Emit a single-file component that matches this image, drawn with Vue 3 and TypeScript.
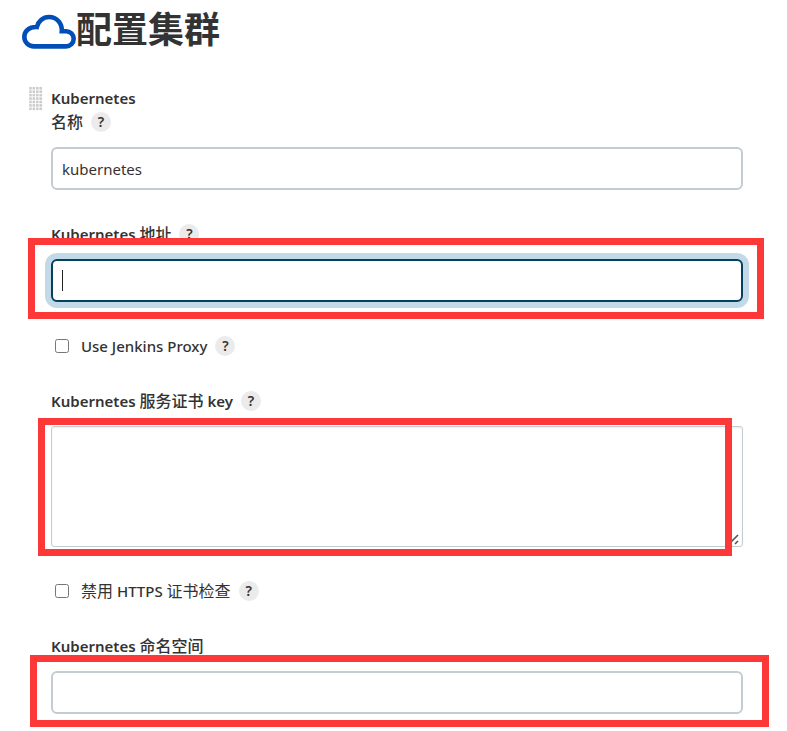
<script setup lang="ts">
import { ref } from 'vue'

const name = ref('kubernetes')
const address = ref('')
const certificateKey = ref('')
const namespace = ref('')
const useProxy = ref(false)
const disableHttpsCheck = ref(false)
</script>

<template>
  <main class="page">
    <h1 class="title">
      <svg class="cloud" viewBox="0 0 54 36" aria-hidden="true">
        <path
          d="M12 32.400H44.100A7.600 7.600 0 0 0 44.100 17.200H39.800C40.200 9 34.500 3 27.200 3C20.800 3 16 7.500 14.800 13C7 12.600 2.300 17.300 2.300 22.800C2.300 28.300 6.500 32.400 12 32.400Z"
        />
      </svg>
      <span>配置集群</span>
    </h1>

    <form class="form" @submit.prevent>
      <div class="section">
        <svg class="handle" viewBox="0 0 16 28" aria-hidden="true">
          <defs>
            <pattern id="grip-dots" width="4" height="4" patternUnits="userSpaceOnUse">
              <rect width="3" height="3" />
            </pattern>
          </defs>
          <rect width="16" height="28" fill="url(#grip-dots)" />
        </svg>
        <strong>Kubernetes</strong>
      </div>

      <div class="field">
        <div class="label">
          <label for="name" class="cjk">名称</label>
          <button type="button" class="help">?</button>
        </div>
        <div class="control">
          <input id="name" v-model="name" type="text" class="input" />
        </div>
      </div>

      <div class="field">
        <div class="label">
          <label for="address">Kubernetes <span class="cjk">地址</span></label>
          <button type="button" class="help">?</button>
        </div>
        <div class="control">
          <input id="address" v-model="address" type="text" class="input active" />
          <span class="caret"></span>
          <span class="mark mark-address"></span>
        </div>
      </div>

      <div class="check">
        <input id="proxy" v-model="useProxy" type="checkbox" />
        <label for="proxy">Use Jenkins Proxy</label>
        <button type="button" class="help">?</button>
      </div>

      <div class="field">
        <div class="label">
          <label for="key">Kubernetes <span class="cjk">服务证书</span> key</label>
          <button type="button" class="help">?</button>
        </div>
        <div class="control">
          <textarea id="key" v-model="certificateKey" class="input area"></textarea>
          <svg class="resizer" viewBox="0 0 12 12" aria-hidden="true">
            <path d="M2 9L9 2M6 11L9 8" />
          </svg>
          <span class="mark mark-key"></span>
        </div>
      </div>

      <div class="check">
        <input id="https" v-model="disableHttpsCheck" type="checkbox" />
        <label for="https"><span class="cjk">禁用</span> HTTPS <span class="cjk">证书检查</span></label>
        <button type="button" class="help">?</button>
      </div>

      <div class="field">
        <div class="label">
          <label for="namespace">Kubernetes <span class="cjk">命名空间</span></label>
        </div>
        <div class="control">
          <input id="namespace" v-model="namespace" type="text" class="input" />
          <span class="mark mark-namespace"></span>
        </div>
      </div>
    </form>
  </main>
</template>

<style>
body {
  margin: 0;
  background: #fff;
}
</style>

<style scoped>
.page {
  box-sizing: border-box;
  padding: 8px 44px 16px 22px;
  color: #333;
  font-family: "Noto Sans", "Noto Sans CJK SC", sans-serif;
  font-size: 15px;
  line-height: 24px;
}

.title {
  display: flex;
  align-items: center;
  margin: 0;
  height: 44px;
  font-size: 36px;
  line-height: 44px;
  font-weight: 700;
}

.cloud {
  width: 54px;
  height: 36px;
  margin-top: 4px;
  fill: none;
  stroke: #024eb9;
  stroke-width: 4.6;
}

.form {
  display: flex;
  flex-direction: column;
  gap: 32px;
  margin-top: 34px;
  padding-left: 29px;
}

.section {
  display: flex;
  gap: 8px;
  height: 24px;
  margin: 0 0 -32px -22px;
}

.section strong {
  font-weight: 600;
}

.handle {
  width: 14px;
  height: 24px;
  margin-top: 1px;
  fill: #ccc;
}

.label {
  display: flex;
  align-items: center;
  gap: 8px;
  height: 24px;
  margin-bottom: 13px;
  font-weight: 600;
}

.cjk {
  font-size: 16px;
  font-weight: 500;
}

.check .cjk {
  font-weight: 400;
}

.help {
  width: 20px;
  height: 20px;
  padding: 0;
  border: 0;
  border-radius: 50%;
  background: #ebebeb;
  color: #333;
  font: 600 14px/20px "Noto Sans", sans-serif;
}

.control {
  position: relative;
  display: flex;
}

.input {
  box-sizing: border-box;
  width: 100%;
  height: 43px;
  margin: 0;
  padding: 0 9px;
  border: 2px solid #c3ccd1;
  border-radius: 6px;
  outline: 0;
  background: #fff;
  color: #333;
  font: 400 15px/24px "Noto Sans", "Noto Sans CJK SC", sans-serif;
}

.input.active {
  border-color: #06405f;
  box-shadow: 0 0 0 6px #c2d9e7;
}

.area {
  height: 121px;
  padding: 8px;
  border-width: 1px;
  border-radius: 3px;
  box-shadow: inset 0 1px 2px rgba(0, 0, 0, 0.08);
  resize: none;
}

.resizer {
  position: absolute;
  right: 2px;
  bottom: 2px;
  width: 12px;
  height: 12px;
  fill: none;
  stroke: #555;
  stroke-width: 1.6;
}

.caret {
  position: absolute;
  top: 11px;
  left: 11px;
  width: 1px;
  height: 21px;
  background: #222;
}

.mark {
  position: absolute;
  border: 7px solid #fd3838;
  pointer-events: none;
}

.mark-address {
  inset: -21px -21px -17px -23px;
}

.mark-key {
  inset: -8px 11px -9px -13px;
}

.mark-namespace {
  inset: -16px -26px -13px -21px;
}

.check {
  display: flex;
  align-items: center;
  gap: 8px;
  height: 23px;
  font-weight: 500;
}

.check input {
  width: 14px;
  height: 14px;
  margin: 0 4px;
}
</style>
